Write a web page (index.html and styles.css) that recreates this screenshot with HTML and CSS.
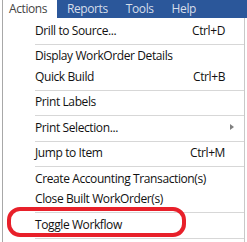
FILE: index.html
```html
<!DOCTYPE html>
<html lang="en">
<head>
  <meta charset="UTF-8" />
  <meta name="viewport" content="width=device-width, initial-scale=1.0"/>
  <title>Actions Menu</title>
  <link rel="stylesheet" href="styles.css">
</head>
<body>

  <div class="menubar">
    <div class="tab active">Actions</div>
    <div class="tabs">
      <div class="tab">Reports</div>
      <div class="tab">Tools</div>
      <div class="tab">Help</div>
    </div>
  </div>

  <div class="dropdown">
    <div class="item"><span class="label">Drill to Source...</span><span class="key">Ctrl+D</span></div>
    <div class="sep"></div>
    <div class="item"><span class="label">Display WorkOrder Details</span></div>
    <div class="item"><span class="label">Quick Build</span><span class="key">Ctrl+B</span></div>
    <div class="sep"></div>
    <div class="item"><span class="label">Print Labels</span></div>
    <div class="sep"></div>
    <div class="item sub"><span class="label">Print Selection...</span><span class="arrow"></span></div>
    <div class="sep"></div>
    <div class="item"><span class="label">Jump to Item</span><span class="key">Ctrl+M</span></div>
    <div class="sep"></div>
    <div class="item"><span class="label">Create Accounting Transaction(s)</span></div>
    <div class="item"><span class="label">Close Built WorkOrder(s)</span></div>
    <div class="sep"></div>
    <div class="item"><span class="label">Toggle Workflow</span></div>
    <div class="sep"></div>
  </div>

  <!-- annotation -->
  <div class="highlight"></div>

</body>
</html>
```

FILE: styles.css
```css
* {
  box-sizing: border-box;
}

body {
  margin: 0;
  padding: 0;
  width: 247px;
  height: 242px;
  overflow: hidden;
  background: #fff;
  font-family: "Open Sans", "Noto Sans", sans-serif;
  font-size: 12px;
  letter-spacing: -0.4px;
  position: relative;
}

.menubar {
  display: flex;
  height: 18px;
  padding-left: 2px;
}

.menubar .tab {
  line-height: 17px;
  white-space: nowrap;
}

.menubar .tab.active {
  width: 55px;
  padding-left: 6px;
  border-left: 1px solid #a8a8a8;
  color: #444;
  background: #fff;
}

.tabs {
  flex: 1;
  display: flex;
  gap: 18px;
  padding-left: 10px;
  background: #2b579a;
  color: #d6deea;
}

.dropdown {
  width: 243px;
  height: 224px;
  margin-left: 2px;
  padding-top: 2px;
  border-left: 1px solid #a8a8a8;
  border-right: 1px solid #c8c8c8;
  background: #fff;
}

.item {
  display: flex;
  align-items: center;
  height: 20.5px;
  padding-left: 32px;
  padding-right: 19px;
  color: #111;
  white-space: nowrap;
}

.item .label {
  flex: 1;
}

.item.sub {
  padding-right: 10px;
}

.arrow {
  width: 0;
  height: 0;
  border-top: 3.5px solid transparent;
  border-bottom: 3.5px solid transparent;
  border-left: 4px solid #808080;
}

.sep {
  height: 1px;
  margin: 3px 0 1px 32px;
  background: #d7d7d7;
}

.highlight {
  position: absolute;
  left: 7px;
  top: 207px;
  width: 179px;
  height: 30px;
  border: 4px solid #e8202a;
  border-radius: 13px;
}
```
